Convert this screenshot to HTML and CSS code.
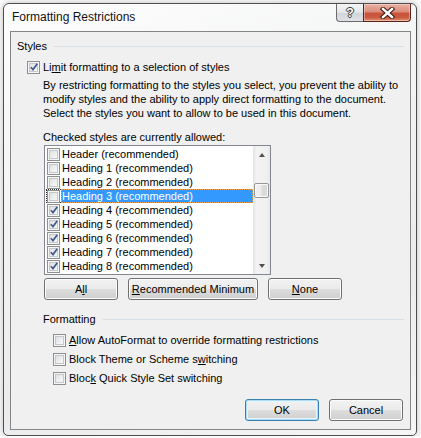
FILE: index.html
```html
<!DOCTYPE html>
<html lang="en">
<head>
  <meta charset="UTF-8">
  <title>Formatting Restrictions</title>
  <link rel="stylesheet" href="styles.css">
</head>
<body>

  <div class="window">
    <div class="titlebar">
      <span class="title">Formatting Restrictions</span>
      <div class="caption">
        <span class="cap help">?</span>
        <span class="cap close">
          <svg width="17" height="12" viewBox="0 0 17 12">
            <path d="M4 2 L13 10 M13 2 L4 10" stroke="#3a1a14" stroke-width="4.4" stroke-linecap="square"/>
            <path d="M4 2 L13 10 M13 2 L4 10" stroke="#fff" stroke-width="2.4" stroke-linecap="square"/>
          </svg>
        </span>
      </div>
    </div>

    <div class="client">
      <div class="group-head"><span>Styles</span><i></i></div>

      <div class="check-row limit">
        <span class="cb on"></span>
        <span>Li<u>m</u>it formatting to a selection of styles</span>
      </div>

      <p class="desc">By restricting formatting to the styles you select, you prevent the ability to<br>modify styles and the ability to apply direct formatting to the document.<br>Select the styles you want to allow to be used in this document.</p>

      <p class="list-label">Checked styles are currently allowed:</p>

      <div class="listbox">
        <ul class="items">
          <li class="item"><span class="cb"></span><span class="name">Header (recommended)</span></li>
          <li class="item"><span class="cb"></span><span class="name">Heading 1 (recommended)</span></li>
          <li class="item"><span class="cb"></span><span class="name">Heading 2 (recommended)</span></li>
          <li class="item sel"><span class="cb"></span><span class="name">Heading 3 (recommended)</span></li>
          <li class="item"><span class="cb on"></span><span class="name">Heading 4 (recommended)</span></li>
          <li class="item"><span class="cb on"></span><span class="name">Heading 5 (recommended)</span></li>
          <li class="item"><span class="cb on"></span><span class="name">Heading 6 (recommended)</span></li>
          <li class="item"><span class="cb on"></span><span class="name">Heading 7 (recommended)</span></li>
          <li class="item"><span class="cb on"></span><span class="name">Heading 8 (recommended)</span></li>
        </ul>
        <div class="vscroll">
          <span class="arrow up"></span>
          <div class="track"><span class="thumb"></span></div>
          <span class="arrow down"></span>
        </div>
      </div>

      <div class="list-btns">
        <button class="btn small">A<u>l</u>l</button>
        <button class="btn wide"><u>R</u>ecommended Minimum</button>
        <button class="btn small"><u>N</u>one</button>
      </div>

      <div class="group-head fmt"><span>Formatting</span><i></i></div>

      <div class="options">
        <div class="check-row"><span class="cb"></span><span><u>A</u>llow AutoFormat to override formatting restrictions</span></div>
        <div class="check-row"><span class="cb"></span><span>Block Theme or Scheme s<u>w</u>itching</span></div>
        <div class="check-row"><span class="cb"></span><span>Bloc<u>k</u> Quick Style Set switching</span></div>
      </div>

      <div class="dialog-btns">
        <button class="btn small default">OK</button>
        <button class="btn small">Cancel</button>
      </div>
    </div>
  </div>

</body>
</html>
```

FILE: styles.css
```css
body {
  margin: 0;
  padding: 3px 0 0 3px;
  background: #fbfbfb;
  font-family: "Liberation Sans", Arial, sans-serif;
  font-size: 11px;
  color: #000;
  overflow: hidden;
}
.window {
  width: 412px;
  height: 431px;
  border: 1px solid #4e4e4e;
  border-radius: 6px 6px 5px 5px;
  background: linear-gradient(160deg, #fdfdfd 0%, #f2f3f4 40%, #e9ebed 70%, #f6f6f6 100%);
  box-shadow: 0 0 6px rgba(0,0,0,0.25);
  display: flex;
  flex-direction: column;
}
.titlebar {
  height: 27px;
  display: flex;
  justify-content: space-between;
  padding: 0 5px 0 8px;
}
.title {
  font-size: 12px;
  line-height: 27px;
  color: #111;
  text-shadow: 0 0 6px #fff, 0 0 3px #fff;
}
.caption {
  display: flex;
  align-items: flex-start;
}
.cap {
  height: 17px;
  border: 1px solid #6c6c6c;
  border-top: none;
  display: flex;
  align-items: center;
  justify-content: center;
}
.help {
  width: 26px;
  border-right: none;
  border-radius: 0 0 0 4px;
  background: linear-gradient(#f4f5f6 0%, #e3e6e9 50%, #cfd4d9 51%, #dfe3e7 100%);
  color: #fff;
  font-weight: bold;
  font-size: 13px;
  text-shadow: 1px 0 0 #333, -1px 0 0 #333, 0 1px 0 #333, 0 -1px 0 #333;
}
.close {
  width: 46px;
  border-color: #5b241b;
  border-radius: 0 0 4px 0;
  background: linear-gradient(#eab1a3 0%, #dc8d7b 45%, #c9543d 55%, #c95a3f 80%, #e29a78 100%);
  box-shadow: inset 0 0 0 1px rgba(255,255,255,0.35);
}
.client {
  flex: 1;
  margin: 0 5px 5px 6px;
  border: 1px solid #858585;
  background: #f0f0f0;
  padding: 7px 6px 0 6px;
  display: flex;
  flex-direction: column;
}
.group-head {
  display: flex;
  align-items: center;
  line-height: 14px;
  height: 14px;
}
.group-head i {
  flex: 1;
  height: 1px;
  background: #d5dfe5;
  margin-left: 7px;
  margin-top: 1px;
}
.group-head.fmt {
  margin: 12px 0 0 26px;
}
.check-row {
  display: flex;
  align-items: center;
  gap: 3px;
  height: 14px;
  line-height: 14px;
}
.limit {
  margin: 7px 0 0 10px;
}
.cb {
  width: 11px;
  height: 11px;
  border: 1px solid #8e8f8f;
  background: linear-gradient(135deg, #d6d8db 0%, #f0f1f2 60%, #fbfbfb 100%);
  box-shadow: inset 0 0 0 1px #f6f6f6, inset 0 0 0 2px #c4c7cb;
  flex: none;
  position: relative;
}
.cb.on::after {
  content: "";
  position: absolute;
  left: 2px;
  top: 1px;
  width: 8px;
  height: 8px;
  background: url("data:image/svg+xml,%3Csvg xmlns='http://www.w3.org/2000/svg' width='8' height='8' viewBox='0 0 8 8'%3E%3Cpath d='M0.8 4.2 L3 6.6 L7.3 0.8' fill='none' stroke='%23435a8e' stroke-width='1.7'/%3E%3C/svg%3E") no-repeat;
}
.desc {
  margin: 4px 0 0 26px;
  line-height: 14px;
}
.list-label {
  margin: 10px 0 0 26px;
  line-height: 14px;
}
.listbox {
  margin: 1px 0 0 27px;
  width: 225px;
  height: 128px;
  border: 1px solid #828790;
  background: #fff;
  display: flex;
}
.items {
  list-style: none;
  margin: 0;
  padding: 1px 0 0 0;
  width: 208px;
}
.item {
  height: 14px;
  display: flex;
  align-items: center;
  padding-left: 2px;
  line-height: 14px;
  white-space: nowrap;
}
.item .cb {
  margin-right: 1px;
}
.item .name {
  flex: 1;
  padding-left: 1px;
  height: 14px;
}
.item.sel {
  position: relative;
}
.item.sel .name {
  background: #3399ff;
  color: #fff;
  outline: 1px dotted #f2a14a;
  outline-offset: -1px;
}
.item.sel::before {
  content: "";
  position: absolute;
  left: 1px;
  top: 0;
  width: 14px;
  height: 12px;
  border: 1px dotted #333;
  border-right: none;
}
.vscroll {
  width: 17px;
  display: flex;
  flex-direction: column;
  background: linear-gradient(90deg, #e4e4e4, #f3f3f3 20%, #f0f0f0 80%, #e7e7e7);
}
.arrow {
  height: 17px;
  display: flex;
  align-items: center;
  justify-content: center;
}
.arrow::after {
  content: "";
  border-left: 3.5px solid transparent;
  border-right: 3.5px solid transparent;
}
.arrow.up::after {
  border-bottom: 4px solid #505050;
}
.arrow.down::after {
  border-top: 4px solid #505050;
}
.track {
  flex: 1;
  padding-top: 20px;
}
.thumb {
  display: block;
  height: 13px;
  margin: 0 1px;
  border: 1px solid #979797;
  border-radius: 2px;
  background: linear-gradient(90deg, #f4f4f4, #ececec 45%, #dcdcdc 55%, #d8d8d8);
  box-shadow: inset 0 0 0 1px #fafafa;
}
.list-btns {
  display: flex;
  gap: 10px;
  margin: 3px 0 0 27px;
}
.btn {
  height: 22px;
  padding: 0;
  font-family: inherit;
  font-size: 11px;
  color: #000;
  border: 1px solid #707070;
  border-radius: 3px;
  background: linear-gradient(#f2f2f2 0%, #ebebeb 48%, #dddddd 52%, #cfcfcf 100%);
  box-shadow: inset 0 0 0 1px #fcfcfc;
}
.btn.small {
  width: 74px;
}
.btn.wide {
  width: 130px;
}
.btn.default {
  border-color: #3c7fb1;
  box-shadow: inset 0 0 0 1px #a9dcf6, inset 0 0 0 2px #e8f5fc;
}
.options {
  display: flex;
  flex-direction: column;
  gap: 5px;
  margin: 7px 0 0 36px;
}
.dialog-btns {
  display: flex;
  justify-content: flex-end;
  gap: 10px;
  margin: 14px 1px 0 0;
}
```
